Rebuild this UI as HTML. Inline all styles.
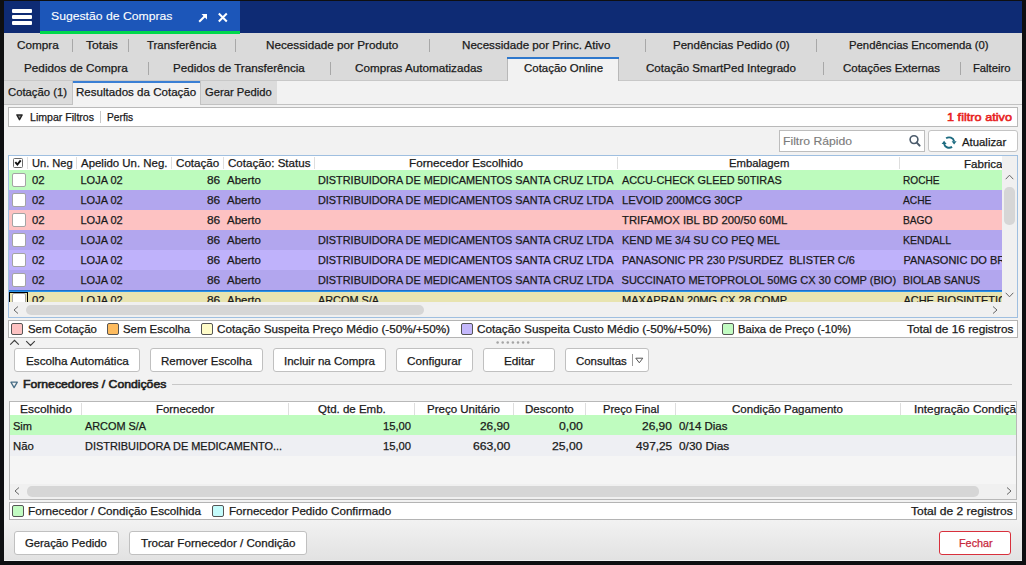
<!DOCTYPE html>
<html><head><meta charset="utf-8"><style>
html,body{margin:0;padding:0;width:1026px;height:565px;overflow:hidden;background:#0e0f11;}
div{position:absolute;}
.t{font-family:"Liberation Sans", sans-serif;white-space:pre;-webkit-text-stroke:0.25px currentColor;}
svg{position:absolute;overflow:visible;}
</style></head><body>
<div style="left:4px;top:1px;width:1018px;height:560px;background:#f2f2f2;"></div>
<div style="left:4px;top:1px;width:1018px;height:32px;background:#0e2b74;"></div>
<div style="left:40px;top:1px;width:200px;height:30px;background:#1c56b9;"></div>
<div style="left:12px;top:9px;width:20px;height:4px;background:#ffffff;border-radius:1px;"></div>
<div style="left:12px;top:15px;width:20px;height:4px;background:#ffffff;border-radius:1px;"></div>
<div style="left:12px;top:21px;width:20px;height:4px;background:#ffffff;border-radius:1px;"></div>
<div class="t" style="left:50.50px;top:10.57px;font-size:11.500px;line-height:11.500px;color:#ffffff;transform:scaleX(1.0609);transform-origin:0 0;-webkit-text-stroke:0.1px #fff;">Sugestão de Compras</div>
<svg style="left:198px;top:13px" width="10" height="10" viewBox="0 0 10 10"><path d="M1.2 8.8 L8 2" stroke="#fff" stroke-width="2" fill="none"/><path d="M3.5 1 H9 V6.5 Z" fill="#fff"/></svg>
<svg style="left:218px;top:13px" width="10" height="10" viewBox="0 0 10 10"><path d="M0.8 0.5 L8.8 8.5 M8.8 0.5 L0.8 8.5" stroke="#fff" stroke-width="2" fill="none"/></svg>
<div style="left:4px;top:33px;width:1018px;height:47px;background:#dadada;"></div>
<div style="left:4px;top:80px;width:1018px;height:1px;background:#c8c8c8;"></div>
<div style="left:40px;top:31px;width:200px;height:3px;background:#00d84c;"></div>
<div style="left:72px;top:39px;width:1px;height:13px;background:#a8a8a8;"></div>
<div style="left:128px;top:39px;width:1px;height:13px;background:#a8a8a8;"></div>
<div style="left:235px;top:39px;width:1px;height:13px;background:#a8a8a8;"></div>
<div style="left:429px;top:39px;width:1px;height:13px;background:#a8a8a8;"></div>
<div style="left:645px;top:39px;width:1px;height:13px;background:#a8a8a8;"></div>
<div style="left:816px;top:39px;width:1px;height:13px;background:#a8a8a8;"></div>
<div style="left:148px;top:62px;width:1px;height:13px;background:#a8a8a8;"></div>
<div style="left:330px;top:62px;width:1px;height:13px;background:#a8a8a8;"></div>
<div style="left:823px;top:62px;width:1px;height:13px;background:#a8a8a8;"></div>
<div style="left:960px;top:62px;width:1px;height:13px;background:#a8a8a8;"></div>
<div class="t" style="left:17.20px;top:39.99px;font-size:11.000px;line-height:11.000px;color:#1a1a1a;transform:scaleX(1.0684);transform-origin:0 0;">Compra</div>
<div class="t" style="left:85.50px;top:39.99px;font-size:11.000px;line-height:11.000px;color:#1a1a1a;transform:scaleX(1.1067);transform-origin:0 0;">Totais</div>
<div class="t" style="left:147.30px;top:39.99px;font-size:11.000px;line-height:11.000px;color:#1a1a1a;transform:scaleX(1.0368);transform-origin:0 0;">Transferência</div>
<div class="t" style="left:266.30px;top:39.99px;font-size:11.000px;line-height:11.000px;color:#1a1a1a;transform:scaleX(1.0650);transform-origin:0 0;">Necessidade por Produto</div>
<div class="t" style="left:462.00px;top:39.99px;font-size:11.000px;line-height:11.000px;color:#1a1a1a;transform:scaleX(1.0550);transform-origin:0 0;">Necessidade por Princ. Ativo</div>
<div class="t" style="left:673.00px;top:39.99px;font-size:11.000px;line-height:11.000px;color:#1a1a1a;transform:scaleX(1.0486);transform-origin:0 0;">Pendências Pedido (0)</div>
<div class="t" style="left:849.40px;top:39.99px;font-size:11.000px;line-height:11.000px;color:#1a1a1a;transform:scaleX(1.0284);transform-origin:0 0;">Pendências Encomenda (0)</div>
<div style="left:507px;top:57px;width:112px;height:24px;background:#f2f2f2;box-sizing:border-box;border:1px solid #b8b8b8;border-bottom:none;"></div>
<div style="left:507px;top:57px;width:112px;height:2px;background:#2f78cc;"></div>
<div class="t" style="left:24.20px;top:62.99px;font-size:11.000px;line-height:11.000px;color:#1a1a1a;transform:scaleX(1.0666);transform-origin:0 0;">Pedidos de Compra</div>
<div class="t" style="left:173.00px;top:62.99px;font-size:11.000px;line-height:11.000px;color:#1a1a1a;transform:scaleX(1.0565);transform-origin:0 0;">Pedidos de Transferência</div>
<div class="t" style="left:354.60px;top:62.99px;font-size:11.000px;line-height:11.000px;color:#1a1a1a;transform:scaleX(1.0619);transform-origin:0 0;">Compras Automatizadas</div>
<div class="t" style="left:524.00px;top:62.99px;font-size:11.000px;line-height:11.000px;color:#1a1a1a;transform:scaleX(1.0419);transform-origin:0 0;">Cotação Online</div>
<div class="t" style="left:646.00px;top:62.99px;font-size:11.000px;line-height:11.000px;color:#1a1a1a;transform:scaleX(1.0528);transform-origin:0 0;">Cotação SmartPed Integrado</div>
<div class="t" style="left:843.00px;top:62.99px;font-size:11.000px;line-height:11.000px;color:#1a1a1a;transform:scaleX(1.0437);transform-origin:0 0;">Cotações Externas</div>
<div class="t" style="left:972.50px;top:62.99px;font-size:11.000px;line-height:11.000px;color:#1a1a1a;transform:scaleX(1.0224);transform-origin:0 0;">Falteiro</div>
<div style="left:4px;top:81px;width:68px;height:23px;background:#dcdcdc;"></div>
<div style="left:201px;top:81px;width:76px;height:23px;background:#dcdcdc;"></div>
<div style="left:4px;top:104px;width:68px;height:1px;background:#c2c2c2;"></div>
<div style="left:201px;top:104px;width:821px;height:1px;background:#c2c2c2;"></div>
<div style="left:72px;top:81px;width:129px;height:24px;background:#f2f2f2;box-sizing:border-box;border:1px solid #c2c2c2;border-bottom:none;border-top:none;"></div>
<div style="left:73px;top:81px;width:127px;height:2px;background:#3a7fd4;"></div>
<div class="t" style="left:8.30px;top:86.99px;font-size:11.000px;line-height:11.000px;color:#1a1a1a;transform:scaleX(1.0266);transform-origin:0 0;">Cotação (1)</div>
<div class="t" style="left:76.10px;top:86.99px;font-size:11.000px;line-height:11.000px;color:#1a1a1a;transform:scaleX(1.0512);transform-origin:0 0;">Resultados da Cotação</div>
<div class="t" style="left:205.30px;top:86.99px;font-size:11.000px;line-height:11.000px;color:#1a1a1a;transform:scaleX(1.0180);transform-origin:0 0;">Gerar Pedido</div>
<div style="left:8px;top:107px;width:1010px;height:20px;background:#ffffff;box-sizing:border-box;border:1px solid #b9b9b9;"></div>
<svg style="left:16px;top:114px" width="8" height="7" viewBox="0 0 8 7"><path d="M0.9 1.0 H6.1 L3.5 5.6 Z" fill="#8a8a8a" stroke="#262626" stroke-width="1.5" stroke-linejoin="round"/></svg>
<div class="t" style="left:29.60px;top:111.99px;font-size:11.000px;line-height:11.000px;color:#1a1a1a;transform:scaleX(0.9606);transform-origin:0 0;">Limpar Filtros</div>
<div style="left:100px;top:111px;width:1px;height:12px;background:#c8c8c8;"></div>
<div class="t" style="left:106.60px;top:111.99px;font-size:11.000px;line-height:11.000px;color:#1a1a1a;transform:scaleX(0.9282);transform-origin:0 0;">Perfis</div>
<div class="t" style="left:947.00px;top:111.57px;font-size:11.500px;line-height:11.500px;color:#e8201c;transform:scaleX(1.1054);transform-origin:0 0;-webkit-text-stroke:0.55px #e8201c;">1 filtro ativo</div>
<div style="left:779px;top:130px;width:146px;height:22px;background:#ffffff;box-sizing:border-box;border:1px solid #bdbdbd;"></div>
<div class="t" style="left:783.00px;top:136.07px;font-size:11.500px;line-height:11.500px;color:#7c7c7c;transform:scaleX(1.0584);transform-origin:0 0;-webkit-text-stroke:0.15px #7c7c7c;">Filtro Rápido</div>
<svg style="left:907px;top:134px" width="14" height="14" viewBox="0 0 14 14"><circle cx="7" cy="5.6" r="3.9" stroke="#4b5b6b" stroke-width="1.6" fill="none"/><path d="M9.8 8.6 L12.6 11.6" stroke="#4b5b6b" stroke-width="2" stroke-linecap="round"/></svg>
<div style="left:928px;top:130px;width:90px;height:22px;background:#ffffff;box-sizing:border-box;border:1px solid #c4c4c4;border-radius:3px;"></div>
<svg style="left:941px;top:134.7px" width="16" height="15" viewBox="0 0 16 15"><path d="M5.12 3.34 A5.2 5.2 0 0 1 13.12 6.25" stroke="#1d6b80" stroke-width="1.9" fill="none"/><path d="M11.08 11.86 A5.2 5.2 0 0 1 3.08 8.95" stroke="#1d6b80" stroke-width="1.9" fill="none"/><path d="M10.6 6.3 L15.6 6.3 L13.1 9.4 Z" fill="#1d6b80"/><path d="M0.6 8.9 L5.6 8.9 L3.1 5.8 Z" fill="#1d6b80"/></svg>
<div class="t" style="left:961.50px;top:136.99px;font-size:11.000px;line-height:11.000px;color:#1a1a1a;transform:scaleX(1.0328);transform-origin:0 0;">Atualizar</div>
<div style="left:8px;top:155px;width:1010px;height:163px;background:#f0f0f0;box-sizing:border-box;border:1px solid #9fbfe0;"></div>
<div style="left:9px;top:156px;width:993px;height:14px;background:#ffffff;"></div>
<div style="left:1002px;top:156px;width:15px;height:161px;background:#f0f0f0;"></div>
<div style="left:27px;top:157px;width:1px;height:12px;background:#dedede;"></div>
<div style="left:76px;top:157px;width:1px;height:12px;background:#dedede;"></div>
<div style="left:171px;top:157px;width:1px;height:12px;background:#dedede;"></div>
<div style="left:223px;top:157px;width:1px;height:12px;background:#dedede;"></div>
<div style="left:314px;top:157px;width:1px;height:12px;background:#dedede;"></div>
<div style="left:617px;top:157px;width:1px;height:12px;background:#dedede;"></div>
<div style="left:899px;top:157px;width:1px;height:12px;background:#dedede;"></div>
<div style="left:13px;top:158px;width:10px;height:10px;background:#ffffff;box-sizing:border-box;border:1px solid #6a6a6a;border-radius:1.5px;"></div>
<svg style="left:14px;top:159px" width="8" height="8" viewBox="0 0 8 8"><path d="M1.3 3.1 L3.4 5.6 L6.7 1.4" stroke="#111" stroke-width="1.9" fill="none"/></svg>
<div class="t" style="left:31.60px;top:158.49px;font-size:11.000px;line-height:11.000px;color:#1a1a1a;transform:scaleX(1.0086);transform-origin:0 0;">Un. Neg</div>
<div class="t" style="left:81.30px;top:158.49px;font-size:11.000px;line-height:11.000px;color:#1a1a1a;transform:scaleX(1.0402);transform-origin:0 0;">Apelido Un. Neg.</div>
<div class="t" style="left:176.00px;top:158.49px;font-size:11.000px;line-height:11.000px;color:#1a1a1a;transform:scaleX(1.0569);transform-origin:0 0;">Cotação</div>
<div class="t" style="left:228.00px;top:158.49px;font-size:11.000px;line-height:11.000px;color:#1a1a1a;transform:scaleX(1.0541);transform-origin:0 0;">Cotação: Status</div>
<div class="t" style="left:409.30px;top:158.49px;font-size:11.000px;line-height:11.000px;color:#1a1a1a;transform:scaleX(1.0654);transform-origin:0 0;">Fornecedor Escolhido</div>
<div class="t" style="left:728.50px;top:158.49px;font-size:11.000px;line-height:11.000px;color:#1a1a1a;transform:scaleX(1.0273);transform-origin:0 0;">Embalagem</div>
<div style="left:9px;top:170px;width:993px;height:132px;overflow:hidden">
<div style="left:0px;top:0px;width:993px;height:20px;background:#bdfbbd;"></div>
<div style="left:3px;top:3px;width:14px;height:14px;background:#ffffff;box-sizing:border-box;border:1px solid #a4a4a4;border-radius:2px;"></div>
<div class="t" style="left:22.50px;top:4.99px;font-size:11.000px;line-height:11.000px;color:#1a1a1a;transform:scaleX(1.0298);transform-origin:0 0;">02</div>
<div class="t" style="left:71.50px;top:4.99px;font-size:11.000px;line-height:11.000px;color:#1a1a1a;">LOJA 02</div>
<div class="t" style="left:198.20px;top:4.99px;font-size:11.000px;line-height:11.000px;color:#1a1a1a;transform:scaleX(1.0788);transform-origin:0 0;">86</div>
<div class="t" style="left:218.40px;top:4.99px;font-size:11.000px;line-height:11.000px;color:#1a1a1a;transform:scaleX(1.0429);transform-origin:0 0;">Aberto</div>
<div class="t" style="left:309.00px;top:4.99px;font-size:11.000px;line-height:11.000px;color:#1a1a1a;transform:scaleX(0.9884);transform-origin:0 0;">DISTRIBUIDORA DE MEDICAMENTOS SANTA CRUZ LTDA</div>
<div class="t" style="left:612.60px;top:4.99px;font-size:11.000px;line-height:11.000px;color:#1a1a1a;transform:scaleX(0.9897);transform-origin:0 0;">ACCU-CHECK GLEED 50TIRAS</div>
<div class="t" style="left:894.40px;top:4.99px;font-size:11.000px;line-height:11.000px;color:#1a1a1a;transform:scaleX(0.9188);transform-origin:0 0;">ROCHE</div>
<div style="left:0px;top:20px;width:993px;height:20px;background:#b2a6ee;"></div>
<div style="left:3px;top:23px;width:14px;height:14px;background:#ffffff;box-sizing:border-box;border:1px solid #a4a4a4;border-radius:2px;"></div>
<div class="t" style="left:22.50px;top:24.99px;font-size:11.000px;line-height:11.000px;color:#1a1a1a;transform:scaleX(1.0298);transform-origin:0 0;">02</div>
<div class="t" style="left:71.50px;top:24.99px;font-size:11.000px;line-height:11.000px;color:#1a1a1a;">LOJA 02</div>
<div class="t" style="left:198.20px;top:24.99px;font-size:11.000px;line-height:11.000px;color:#1a1a1a;transform:scaleX(1.0788);transform-origin:0 0;">86</div>
<div class="t" style="left:218.40px;top:24.99px;font-size:11.000px;line-height:11.000px;color:#1a1a1a;transform:scaleX(1.0429);transform-origin:0 0;">Aberto</div>
<div class="t" style="left:309.00px;top:24.99px;font-size:11.000px;line-height:11.000px;color:#1a1a1a;transform:scaleX(0.9884);transform-origin:0 0;">DISTRIBUIDORA DE MEDICAMENTOS SANTA CRUZ LTDA</div>
<div class="t" style="left:612.60px;top:24.99px;font-size:11.000px;line-height:11.000px;color:#1a1a1a;transform:scaleX(1.0204);transform-origin:0 0;">LEVOID 200MCG 30CP</div>
<div class="t" style="left:894.40px;top:24.99px;font-size:11.000px;line-height:11.000px;color:#1a1a1a;transform:scaleX(0.9293);transform-origin:0 0;">ACHE</div>
<div style="left:0px;top:40px;width:993px;height:20px;background:#fdc2c2;"></div>
<div style="left:3px;top:43px;width:14px;height:14px;background:#ffffff;box-sizing:border-box;border:1px solid #a4a4a4;border-radius:2px;"></div>
<div class="t" style="left:22.50px;top:44.99px;font-size:11.000px;line-height:11.000px;color:#1a1a1a;transform:scaleX(1.0298);transform-origin:0 0;">02</div>
<div class="t" style="left:71.50px;top:44.99px;font-size:11.000px;line-height:11.000px;color:#1a1a1a;">LOJA 02</div>
<div class="t" style="left:198.20px;top:44.99px;font-size:11.000px;line-height:11.000px;color:#1a1a1a;transform:scaleX(1.0788);transform-origin:0 0;">86</div>
<div class="t" style="left:218.40px;top:44.99px;font-size:11.000px;line-height:11.000px;color:#1a1a1a;transform:scaleX(1.0429);transform-origin:0 0;">Aberto</div>
<div class="t" style="left:612.60px;top:44.99px;font-size:11.000px;line-height:11.000px;color:#1a1a1a;transform:scaleX(1.0273);transform-origin:0 0;">TRIFAMOX IBL BD 200/50 60ML</div>
<div class="t" style="left:894.40px;top:44.99px;font-size:11.000px;line-height:11.000px;color:#1a1a1a;transform:scaleX(0.9281);transform-origin:0 0;">BAGO</div>
<div style="left:0px;top:60px;width:993px;height:20px;background:#b2a6ee;"></div>
<div style="left:3px;top:63px;width:14px;height:14px;background:#ffffff;box-sizing:border-box;border:1px solid #a4a4a4;border-radius:2px;"></div>
<div class="t" style="left:22.50px;top:64.99px;font-size:11.000px;line-height:11.000px;color:#1a1a1a;transform:scaleX(1.0298);transform-origin:0 0;">02</div>
<div class="t" style="left:71.50px;top:64.99px;font-size:11.000px;line-height:11.000px;color:#1a1a1a;">LOJA 02</div>
<div class="t" style="left:198.20px;top:64.99px;font-size:11.000px;line-height:11.000px;color:#1a1a1a;transform:scaleX(1.0788);transform-origin:0 0;">86</div>
<div class="t" style="left:218.40px;top:64.99px;font-size:11.000px;line-height:11.000px;color:#1a1a1a;transform:scaleX(1.0429);transform-origin:0 0;">Aberto</div>
<div class="t" style="left:309.00px;top:64.99px;font-size:11.000px;line-height:11.000px;color:#1a1a1a;transform:scaleX(0.9884);transform-origin:0 0;">DISTRIBUIDORA DE MEDICAMENTOS SANTA CRUZ LTDA</div>
<div class="t" style="left:612.60px;top:64.99px;font-size:11.000px;line-height:11.000px;color:#1a1a1a;transform:scaleX(0.9974);transform-origin:0 0;">KEND ME 3/4 SU CO PEQ MEL</div>
<div class="t" style="left:894.40px;top:64.99px;font-size:11.000px;line-height:11.000px;color:#1a1a1a;transform:scaleX(0.9594);transform-origin:0 0;">KENDALL</div>
<div style="left:0px;top:80px;width:993px;height:20px;background:#bfb2fb;"></div>
<div style="left:3px;top:83px;width:14px;height:14px;background:#ffffff;box-sizing:border-box;border:1px solid #a4a4a4;border-radius:2px;"></div>
<div class="t" style="left:22.50px;top:84.99px;font-size:11.000px;line-height:11.000px;color:#1a1a1a;transform:scaleX(1.0298);transform-origin:0 0;">02</div>
<div class="t" style="left:71.50px;top:84.99px;font-size:11.000px;line-height:11.000px;color:#1a1a1a;">LOJA 02</div>
<div class="t" style="left:198.20px;top:84.99px;font-size:11.000px;line-height:11.000px;color:#1a1a1a;transform:scaleX(1.0788);transform-origin:0 0;">86</div>
<div class="t" style="left:218.40px;top:84.99px;font-size:11.000px;line-height:11.000px;color:#1a1a1a;transform:scaleX(1.0429);transform-origin:0 0;">Aberto</div>
<div class="t" style="left:309.00px;top:84.99px;font-size:11.000px;line-height:11.000px;color:#1a1a1a;transform:scaleX(0.9884);transform-origin:0 0;">DISTRIBUIDORA DE MEDICAMENTOS SANTA CRUZ LTDA</div>
<div class="t" style="left:612.60px;top:84.99px;font-size:11.000px;line-height:11.000px;color:#1a1a1a;transform:scaleX(0.9926);transform-origin:0 0;">PANASONIC PR 230 P/SURDEZ  BLISTER C/6</div>
<div class="t" style="left:894.40px;top:84.99px;font-size:11.000px;line-height:11.000px;color:#1a1a1a;">PANASONIC DO BRASIL LTDA</div>
<div style="left:0px;top:100px;width:993px;height:20px;background:#b2a6ee;"></div>
<div style="left:3px;top:103px;width:14px;height:14px;background:#ffffff;box-sizing:border-box;border:1px solid #a4a4a4;border-radius:2px;"></div>
<div class="t" style="left:22.50px;top:104.99px;font-size:11.000px;line-height:11.000px;color:#1a1a1a;transform:scaleX(1.0298);transform-origin:0 0;">02</div>
<div class="t" style="left:71.50px;top:104.99px;font-size:11.000px;line-height:11.000px;color:#1a1a1a;">LOJA 02</div>
<div class="t" style="left:198.20px;top:104.99px;font-size:11.000px;line-height:11.000px;color:#1a1a1a;transform:scaleX(1.0788);transform-origin:0 0;">86</div>
<div class="t" style="left:218.40px;top:104.99px;font-size:11.000px;line-height:11.000px;color:#1a1a1a;transform:scaleX(1.0429);transform-origin:0 0;">Aberto</div>
<div class="t" style="left:309.00px;top:104.99px;font-size:11.000px;line-height:11.000px;color:#1a1a1a;transform:scaleX(0.9884);transform-origin:0 0;">DISTRIBUIDORA DE MEDICAMENTOS SANTA CRUZ LTDA</div>
<div class="t" style="left:612.60px;top:104.99px;font-size:11.000px;line-height:11.000px;color:#1a1a1a;">SUCCINATO METOPROLOL 50MG CX 30 COMP (BIO)</div>
<div class="t" style="left:894.40px;top:104.99px;font-size:11.000px;line-height:11.000px;color:#1a1a1a;transform:scaleX(0.9542);transform-origin:0 0;">BIOLAB SANUS</div>
<div style="left:0px;top:120px;width:993px;height:1px;background:#1b6fcc;"></div>
<div style="left:0px;top:121px;width:993px;height:1px;background:#2a94ea;"></div>
<div style="left:0px;top:122px;width:993px;height:20px;background:#e8e4b0;"></div>
<div style="left:3px;top:123px;width:14px;height:14px;background:#ffffff;box-sizing:border-box;border:1px solid #a4a4a4;border-radius:2px;"></div>
<div class="t" style="left:22.50px;top:124.99px;font-size:11.000px;line-height:11.000px;color:#1a1a1a;transform:scaleX(1.0298);transform-origin:0 0;">02</div>
<div class="t" style="left:71.50px;top:124.99px;font-size:11.000px;line-height:11.000px;color:#1a1a1a;">LOJA 02</div>
<div class="t" style="left:198.20px;top:124.99px;font-size:11.000px;line-height:11.000px;color:#1a1a1a;transform:scaleX(1.0788);transform-origin:0 0;">86</div>
<div class="t" style="left:218.40px;top:124.99px;font-size:11.000px;line-height:11.000px;color:#1a1a1a;transform:scaleX(1.0429);transform-origin:0 0;">Aberto</div>
<div class="t" style="left:309.00px;top:124.99px;font-size:11.000px;line-height:11.000px;color:#1a1a1a;transform:scaleX(0.9882);transform-origin:0 0;">ARCOM S/A</div>
<div class="t" style="left:612.60px;top:124.99px;font-size:11.000px;line-height:11.000px;color:#1a1a1a;transform:scaleX(1.0035);transform-origin:0 0;">MAXAPRAN 20MG CX 28 COMP</div>
<div class="t" style="left:894.40px;top:124.99px;font-size:11.000px;line-height:11.000px;color:#1a1a1a;">ACHE BIOSINTETICA</div>
<div style="left:0px;top:122px;width:19px;height:10px;box-sizing:border-box;border:1px solid #000;border-bottom:none"></div>
</div>
<div style="left:899px;top:156px;width:103px;height:14px;overflow:hidden">
<div class="t" style="left:65.00px;top:2.69px;font-size:11.000px;line-height:11.000px;color:#1a1a1a;transform:scaleX(1.0506);transform-origin:0 0;">Fabricante</div>
</div>
<svg style="left:1005px;top:174px" width="9" height="6" viewBox="0 0 9 6"><path d="M0.7 5.2 L4.5 1.2 L8.3 5.2" stroke="#666" stroke-width="1" fill="none"/></svg>
<div style="left:1004px;top:187px;width:11px;height:38px;background:#d6d6d6;border-radius:5px;"></div>
<svg style="left:1005px;top:292px" width="9" height="6" viewBox="0 0 9 6"><path d="M0.7 0.8 L4.5 4.8 L8.3 0.8" stroke="#666" stroke-width="1" fill="none"/></svg>
<div style="left:9px;top:302px;width:993px;height:15px;background:#f0f0f0;"></div>
<div style="left:26px;top:305px;width:398px;height:10px;background:#d6d6d6;border-radius:5px;"></div>
<svg style="left:13px;top:306px" width="6" height="8" viewBox="0 0 6 8"><path d="M5 0.5 L1 4 L5 7.5" stroke="#666" stroke-width="1" fill="none"/></svg>
<svg style="left:992px;top:306px" width="6" height="8" viewBox="0 0 6 8"><path d="M1 0.5 L5 4 L1 7.5" stroke="#666" stroke-width="1" fill="none"/></svg>
<div style="left:8px;top:320px;width:1010px;height:18px;background:#ffffff;box-sizing:border-box;border:1px solid #b4b4b4;"></div>
<div style="left:11px;top:323px;width:12px;height:12px;background:#fdc2c2;box-sizing:border-box;border:1px solid #555;border-radius:2px;"></div>
<div class="t" style="left:27.60px;top:323.99px;font-size:11.000px;line-height:11.000px;color:#1a1a1a;transform:scaleX(1.0338);transform-origin:0 0;">Sem Cotação</div>
<div style="left:107px;top:323px;width:12px;height:12px;background:#fdbb5e;box-sizing:border-box;border:1px solid #555;border-radius:2px;"></div>
<div class="t" style="left:123.30px;top:323.99px;font-size:11.000px;line-height:11.000px;color:#1a1a1a;transform:scaleX(1.0369);transform-origin:0 0;">Sem Escolha</div>
<div style="left:201px;top:323px;width:12px;height:12px;background:#fffcc8;box-sizing:border-box;border:1px solid #555;border-radius:2px;"></div>
<div class="t" style="left:217.00px;top:323.99px;font-size:11.000px;line-height:11.000px;color:#1a1a1a;transform:scaleX(1.0630);transform-origin:0 0;">Cotação Suspeita Preço Médio (-50%/+50%)</div>
<div style="left:461px;top:323px;width:12px;height:12px;background:#c4b8fc;box-sizing:border-box;border:1px solid #555;border-radius:2px;"></div>
<div class="t" style="left:477.20px;top:323.99px;font-size:11.000px;line-height:11.000px;color:#1a1a1a;transform:scaleX(1.0689);transform-origin:0 0;">Cotação Suspeita Custo Médio (-50%/+50%)</div>
<div style="left:722px;top:323px;width:12px;height:12px;background:#c2fcc2;box-sizing:border-box;border:1px solid #555;border-radius:2px;"></div>
<div class="t" style="left:738.00px;top:323.99px;font-size:11.000px;line-height:11.000px;color:#1a1a1a;transform:scaleX(1.0211);transform-origin:0 0;">Baixa de Preço (-10%)</div>
<div class="t" style="left:906.70px;top:323.99px;font-size:11.000px;line-height:11.000px;color:#1a1a1a;transform:scaleX(1.0752);transform-origin:0 0;">Total de 16 registros</div>
<svg style="left:10px;top:340px" width="26" height="7" viewBox="0 0 26 7"><path d="M0.2 4.6 L4.5 0.3 L8.8 4.6 M16.2 1.1 L20.5 5.4 L24.8 1.1" stroke="#3c3c3c" stroke-width="1.1" fill="none"/></svg>
<svg style="left:495px;top:340px" width="40" height="6" viewBox="0 0 40 6"><circle cx="2.60" cy="2.6" r="1.25" fill="#a4a4a4"/><circle cx="7.70" cy="2.6" r="1.25" fill="#a4a4a4"/><circle cx="12.80" cy="2.6" r="1.25" fill="#a4a4a4"/><circle cx="17.90" cy="2.6" r="1.25" fill="#a4a4a4"/><circle cx="23.00" cy="2.6" r="1.25" fill="#a4a4a4"/><circle cx="28.10" cy="2.6" r="1.25" fill="#a4a4a4"/><circle cx="33.20" cy="2.6" r="1.25" fill="#a4a4a4"/></svg>
<div style="left:14px;top:348px;width:126px;height:24px;background:#ffffff;box-sizing:border-box;border:1px solid #c0c0c0;border-radius:3px;"></div>
<div class="t" style="left:25.60px;top:355.59px;font-size:11.000px;line-height:11.000px;color:#1a1a1a;transform:scaleX(1.0636);transform-origin:0 0;">Escolha Automática</div>
<div style="left:150px;top:348px;width:113px;height:24px;background:#ffffff;box-sizing:border-box;border:1px solid #c0c0c0;border-radius:3px;"></div>
<div class="t" style="left:161.00px;top:355.59px;font-size:11.000px;line-height:11.000px;color:#1a1a1a;transform:scaleX(1.0459);transform-origin:0 0;">Remover Escolha</div>
<div style="left:273px;top:348px;width:113px;height:24px;background:#ffffff;box-sizing:border-box;border:1px solid #c0c0c0;border-radius:3px;"></div>
<div class="t" style="left:284.00px;top:355.59px;font-size:11.000px;line-height:11.000px;color:#1a1a1a;transform:scaleX(1.0482);transform-origin:0 0;">Incluir na Compra</div>
<div style="left:396px;top:348px;width:77px;height:24px;background:#ffffff;box-sizing:border-box;border:1px solid #c0c0c0;border-radius:3px;"></div>
<div class="t" style="left:407.00px;top:355.59px;font-size:11.000px;line-height:11.000px;color:#1a1a1a;transform:scaleX(1.0631);transform-origin:0 0;">Configurar</div>
<div style="left:483px;top:348px;width:72px;height:24px;background:#ffffff;box-sizing:border-box;border:1px solid #c0c0c0;border-radius:3px;"></div>
<div class="t" style="left:504.00px;top:355.59px;font-size:11.000px;line-height:11.000px;color:#1a1a1a;transform:scaleX(1.0684);transform-origin:0 0;">Editar</div>
<div style="left:565px;top:348px;width:84px;height:24px;background:#ffffff;box-sizing:border-box;border:1px solid #c0c0c0;border-radius:3px;"></div>
<div class="t" style="left:576.00px;top:355.59px;font-size:11.000px;line-height:11.000px;color:#1a1a1a;transform:scaleX(1.0385);transform-origin:0 0;">Consultas</div>
<div style="left:632px;top:354px;width:1px;height:12px;background:#9a9a9a;"></div>
<svg style="left:635px;top:357px" width="9" height="7" viewBox="0 0 9 7"><path d="M0.8 1.2 H7.8 L4.3 5.8 Z" fill="none" stroke="#555" stroke-width="1" stroke-linejoin="round"/></svg>
<svg style="left:10px;top:381px" width="9" height="8" viewBox="0 0 9 8"><path d="M0.9 1.2 H7.3 L4.1 6.6 Z" fill="none" stroke="#4a6f86" stroke-width="1.3" stroke-linejoin="round"/></svg>
<div class="t" style="left:22.70px;top:378.87px;font-size:11.500px;line-height:11.500px;color:#222;transform:scaleX(1.0624);transform-origin:0 0;-webkit-text-stroke:0.6px #222;">Fornecedores / Condições</div>
<div style="left:172px;top:384px;width:840px;height:1px;background:#c8c8c8;"></div>
<div style="left:9px;top:401px;width:1008px;height:99px;background:#f5f5f5;box-sizing:border-box;border:1px solid #b8b8b8;"></div>
<div style="left:10px;top:402px;width:1006px;height:13px;background:#ffffff;"></div>
<div style="left:81px;top:403px;width:1px;height:12px;background:#dedede;"></div>
<div style="left:288px;top:403px;width:1px;height:12px;background:#dedede;"></div>
<div style="left:414px;top:403px;width:1px;height:12px;background:#dedede;"></div>
<div style="left:513px;top:403px;width:1px;height:12px;background:#dedede;"></div>
<div style="left:585px;top:403px;width:1px;height:12px;background:#dedede;"></div>
<div style="left:675px;top:403px;width:1px;height:12px;background:#dedede;"></div>
<div style="left:900px;top:403px;width:1px;height:12px;background:#dedede;"></div>
<div class="t" style="left:20.30px;top:404.49px;font-size:11.000px;line-height:11.000px;color:#1a1a1a;transform:scaleX(1.0882);transform-origin:0 0;">Escolhido</div>
<div class="t" style="left:156.40px;top:404.49px;font-size:11.000px;line-height:11.000px;color:#1a1a1a;transform:scaleX(1.0346);transform-origin:0 0;">Fornecedor</div>
<div class="t" style="left:318.00px;top:404.49px;font-size:11.000px;line-height:11.000px;color:#1a1a1a;transform:scaleX(1.0462);transform-origin:0 0;">Qtd. de Emb.</div>
<div class="t" style="left:427.00px;top:404.49px;font-size:11.000px;line-height:11.000px;color:#1a1a1a;transform:scaleX(1.0474);transform-origin:0 0;">Preço Unitário</div>
<div class="t" style="left:525.20px;top:404.49px;font-size:11.000px;line-height:11.000px;color:#1a1a1a;transform:scaleX(1.0501);transform-origin:0 0;">Desconto</div>
<div class="t" style="left:603.30px;top:404.49px;font-size:11.000px;line-height:11.000px;color:#1a1a1a;transform:scaleX(1.0102);transform-origin:0 0;">Preço Final</div>
<div class="t" style="left:732.30px;top:404.49px;font-size:11.000px;line-height:11.000px;color:#1a1a1a;transform:scaleX(1.0492);transform-origin:0 0;">Condição Pagamento</div>
<div style="left:900px;top:402px;width:116px;height:13px;overflow:hidden">
<div class="t" style="left:14.30px;top:2.49px;font-size:11.000px;line-height:11.000px;color:#1a1a1a;transform:scaleX(1.0698);transform-origin:0 0;">Integração Condição</div>
</div>
<div style="left:10px;top:415px;width:1006px;height:20px;background:#bffcbf;"></div>
<div style="left:10px;top:435px;width:1006px;height:21px;background:#eeeff3;"></div>
<div class="t" style="left:13.20px;top:421.09px;font-size:11.000px;line-height:11.000px;color:#1a1a1a;transform:scaleX(1.0030);transform-origin:0 0;">Sim</div>
<div class="t" style="left:85.10px;top:421.09px;font-size:11.000px;line-height:11.000px;color:#1a1a1a;transform:scaleX(0.9898);transform-origin:0 0;">ARCOM S/A</div>
<div class="t" style="left:383.30px;top:421.09px;font-size:11.000px;line-height:11.000px;color:#1a1a1a;transform:scaleX(1.0208);transform-origin:0 0;">15,00</div>
<div class="t" style="left:480.30px;top:421.09px;font-size:11.000px;line-height:11.000px;color:#1a1a1a;transform:scaleX(1.0789);transform-origin:0 0;">26,90</div>
<div class="t" style="left:558.90px;top:421.09px;font-size:11.000px;line-height:11.000px;color:#1a1a1a;transform:scaleX(1.1117);transform-origin:0 0;">0,00</div>
<div class="t" style="left:642.30px;top:421.09px;font-size:11.000px;line-height:11.000px;color:#1a1a1a;transform:scaleX(1.0862);transform-origin:0 0;">26,90</div>
<div class="t" style="left:679.00px;top:421.09px;font-size:11.000px;line-height:11.000px;color:#1a1a1a;transform:scaleX(1.0415);transform-origin:0 0;">0/14 Dias</div>
<div class="t" style="left:12.70px;top:441.09px;font-size:11.000px;line-height:11.000px;color:#1a1a1a;transform:scaleX(1.0308);transform-origin:0 0;">Não</div>
<div class="t" style="left:85.10px;top:441.09px;font-size:11.000px;line-height:11.000px;color:#1a1a1a;transform:scaleX(0.9933);transform-origin:0 0;">DISTRIBUIDORA DE MEDICAMENTO...</div>
<div class="t" style="left:383.30px;top:441.09px;font-size:11.000px;line-height:11.000px;color:#1a1a1a;transform:scaleX(1.0208);transform-origin:0 0;">15,00</div>
<div class="t" style="left:472.70px;top:441.09px;font-size:11.000px;line-height:11.000px;color:#1a1a1a;transform:scaleX(1.1086);transform-origin:0 0;">663,00</div>
<div class="t" style="left:552.30px;top:441.09px;font-size:11.000px;line-height:11.000px;color:#1a1a1a;transform:scaleX(1.1044);transform-origin:0 0;">25,00</div>
<div class="t" style="left:636.00px;top:441.09px;font-size:11.000px;line-height:11.000px;color:#1a1a1a;transform:scaleX(1.0760);transform-origin:0 0;">497,25</div>
<div class="t" style="left:679.00px;top:441.09px;font-size:11.000px;line-height:11.000px;color:#1a1a1a;transform:scaleX(1.0803);transform-origin:0 0;">0/30 Dias</div>
<div style="left:10px;top:484px;width:1006px;height:15px;background:#f0f0f0;"></div>
<div style="left:27px;top:486px;width:952px;height:11px;background:#d6d6d6;border-radius:5px;"></div>
<svg style="left:14px;top:487px" width="6" height="8" viewBox="0 0 6 8"><path d="M5 0.5 L1 4 L5 7.5" stroke="#666" stroke-width="1" fill="none"/></svg>
<svg style="left:1006px;top:487px" width="6" height="8" viewBox="0 0 6 8"><path d="M1 0.5 L5 4 L1 7.5" stroke="#666" stroke-width="1" fill="none"/></svg>
<div style="left:9px;top:502px;width:1008px;height:18px;background:#ffffff;box-sizing:border-box;border:1px solid #b4b4b4;"></div>
<div style="left:12px;top:505px;width:12px;height:12px;background:#c2fcc2;box-sizing:border-box;border:1px solid #555;border-radius:2px;"></div>
<div class="t" style="left:28.40px;top:505.99px;font-size:11.000px;line-height:11.000px;color:#1a1a1a;transform:scaleX(1.0643);transform-origin:0 0;">Fornecedor / Condição Escolhida</div>
<div style="left:212px;top:505px;width:12px;height:12px;background:#c4fcfc;box-sizing:border-box;border:1px solid #555;border-radius:2px;"></div>
<div class="t" style="left:228.90px;top:505.99px;font-size:11.000px;line-height:11.000px;color:#1a1a1a;transform:scaleX(1.0562);transform-origin:0 0;">Fornecedor Pedido Confirmado</div>
<div class="t" style="left:910.50px;top:505.99px;font-size:11.000px;line-height:11.000px;color:#1a1a1a;transform:scaleX(1.0954);transform-origin:0 0;">Total de 2 registros</div>
<div style="left:4px;top:520px;width:1018px;height:40px;background:linear-gradient(#f2f2f2,#e2e2e2);"></div>
<div style="left:4px;top:560px;width:1018px;height:1px;background:#f2f2f2;"></div>
<div style="left:14px;top:531px;width:105px;height:24px;background:#ffffff;box-sizing:border-box;border:1px solid #c0c0c0;border-radius:3px;"></div>
<div class="t" style="left:25.20px;top:538.19px;font-size:11.000px;line-height:11.000px;color:#1a1a1a;transform:scaleX(1.0290);transform-origin:0 0;">Geração Pedido</div>
<div style="left:129px;top:531px;width:178px;height:24px;background:#ffffff;box-sizing:border-box;border:1px solid #c0c0c0;border-radius:3px;"></div>
<div class="t" style="left:140.70px;top:538.19px;font-size:11.000px;line-height:11.000px;color:#1a1a1a;transform:scaleX(1.0559);transform-origin:0 0;">Trocar Fornecedor / Condição</div>
<div style="left:939px;top:531px;width:72px;height:24px;background:#ffffff;box-sizing:border-box;border:1px solid #d8303c;border-radius:3px;"></div>
<div class="t" style="left:958.60px;top:538.19px;font-size:11.000px;line-height:11.000px;color:#c8283c;transform:scaleX(0.9844);transform-origin:0 0;">Fechar</div>
</body></html>
